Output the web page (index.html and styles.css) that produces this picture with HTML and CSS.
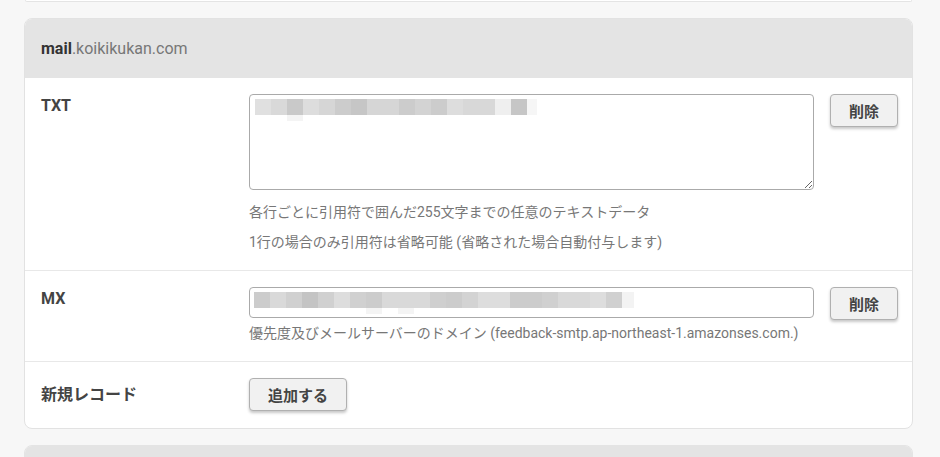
FILE: index.html
```html
<!doctype html>
<html>
<head>
    <meta charset="utf-8">
    <title>DNSレコード</title>
    <link rel="stylesheet" href="styles.css">
</head>
<body>
<div class="page">
    <div class="card-tail"></div>

    <div class="card">
        <div class="card-head"><b>mail</b><span class="domain">.koikikukan.com</span></div>

        <div class="row">
            <div class="label">TXT</div>
            <div class="field">
                <div class="mosaic-wrap">
                    <textarea class="txt-area"></textarea>
                    <svg class="mosaic" width="290" height="22" viewBox="0 0 290 22">
                        <rect x="0" y="0" width="16" height="16" fill="#e0e0e0"/>
                        <rect x="16" y="0" width="16" height="16" fill="#d9d9d9"/>
                        <rect x="32" y="0" width="16" height="16" fill="#c9c9c9"/>
                        <rect x="32" y="16" width="16" height="6" fill="#f4f4f4"/>
                        <rect x="48" y="0" width="16" height="16" fill="#dddddd"/>
                        <rect x="64" y="0" width="16" height="16" fill="#d6d6d6"/>
                        <rect x="80" y="0" width="16" height="16" fill="#cccccc"/>
                        <rect x="96" y="0" width="16" height="16" fill="#c6c6c6"/>
                        <rect x="112" y="0" width="16" height="16" fill="#d6d6d6"/>
                        <rect x="128" y="0" width="16" height="16" fill="#d6d6d6"/>
                        <rect x="144" y="0" width="16" height="16" fill="#cccccc"/>
                        <rect x="160" y="0" width="16" height="16" fill="#d3d3d3"/>
                        <rect x="176" y="0" width="16" height="16" fill="#cccccc"/>
                        <rect x="192" y="0" width="16" height="16" fill="#dddddd"/>
                        <rect x="208" y="0" width="16" height="16" fill="#d8d8d8"/>
                        <rect x="224" y="0" width="16" height="16" fill="#d8d8d8"/>
                        <rect x="240" y="0" width="16" height="16" fill="#efefef"/>
                        <rect x="256" y="0" width="16" height="16" fill="#c6c6c6"/>
                        <rect x="272" y="0" width="10" height="16" fill="#f6f6f6"/>
                    </svg>
                </div>
                <p class="help">各行ごとに引用符で囲んだ255文字までの任意のテキストデータ</p>
                <p class="help">1行の場合のみ引用符は省略可能 (省略された場合自動付与します)</p>
            </div>
            <div><button class="btn">削除</button></div>
        </div>

        <div class="row">
            <div class="label">MX</div>
            <div class="field">
                <div class="mosaic-wrap">
                    <input class="txt-input" type="text">
                    <svg class="mosaic mosaic-mx" width="390" height="22" viewBox="0 0 390 22">
                        <rect x="0" y="0" width="16" height="16" fill="#cccccc"/>
                        <rect x="16" y="0" width="16" height="16" fill="#d9d9d9"/>
                        <rect x="32" y="0" width="16" height="16" fill="#d0d0d0"/>
                        <rect x="48" y="0" width="16" height="16" fill="#c4c4c4"/>
                        <rect x="64" y="0" width="16" height="16" fill="#d0d0d0"/>
                        <rect x="80" y="0" width="16" height="16" fill="#dddddd"/>
                        <rect x="96" y="0" width="16" height="16" fill="#d0d0d0"/>
                        <rect x="112" y="0" width="16" height="16" fill="#cccccc"/>
                        <rect x="112" y="16" width="16" height="6" fill="#f4f4f4"/>
                        <rect x="128" y="0" width="16" height="16" fill="#d9d9d9"/>
                        <rect x="144" y="0" width="16" height="16" fill="#d9d9d9"/>
                        <rect x="144" y="16" width="16" height="6" fill="#f4f4f4"/>
                        <rect x="160" y="0" width="16" height="16" fill="#d9d9d9"/>
                        <rect x="176" y="0" width="16" height="16" fill="#cfcfcf"/>
                        <rect x="192" y="0" width="16" height="16" fill="#cccccc"/>
                        <rect x="208" y="0" width="16" height="16" fill="#d3d3d3"/>
                        <rect x="224" y="0" width="16" height="16" fill="#dddddd"/>
                        <rect x="240" y="0" width="16" height="16" fill="#dddddd"/>
                        <rect x="256" y="0" width="16" height="16" fill="#cccccc"/>
                        <rect x="272" y="0" width="16" height="16" fill="#cccccc"/>
                        <rect x="288" y="0" width="16" height="16" fill="#d0d0d0"/>
                        <rect x="304" y="0" width="16" height="16" fill="#d9d9d9"/>
                        <rect x="320" y="0" width="16" height="16" fill="#d9d9d9"/>
                        <rect x="336" y="0" width="16" height="16" fill="#dddddd"/>
                        <rect x="352" y="0" width="16" height="16" fill="#d0d0d0"/>
                        <rect x="368" y="0" width="12" height="16" fill="#f3f3f3"/>
                    </svg>
                </div>
                <p class="help">優先度及びメールサーバーのドメイン (feedback-smtp.ap-northeast-1.amazonses.com.)</p>
            </div>
            <div><button class="btn">削除</button></div>
        </div>

        <div class="row row-add">
            <div class="label">新規レコード</div>
            <div class="field"><button class="btn">追加する</button></div>
            <div></div>
        </div>
    </div>

    <div class="card card-next">
        <div class="card-head"></div>
    </div>
</div>
</body>
</html>
```

FILE: styles.css
```css
body {
    margin: 0;
    background: #f7f7f7;
    color: #444;
    font-family: Roboto, "Noto Sans CJK JP", sans-serif;
    font-size: 14px;
}

.page {
    padding: 0 27px 0 24px;
    overflow: hidden;
    height: 457px;
    box-sizing: border-box;
}

.card-tail {
    height: 1px;
    margin: 0 1px;
    background: #fff;
    border: 1px solid #e4e4e4;
    border-top: none;
    border-radius: 0 0 6px 6px;
}

.card {
    margin-top: 16px;
    background: #fff;
    border: 1px solid #e2e2e2;
    border-radius: 8px;
    overflow: hidden;
}

.card-head {
    height: 59px;
    background: #e4e4e4;
    display: flex;
    align-items: center;
    padding: 0 16px;
    font-size: 16px;
    color: #333;
}

.card-head b {
    font-weight: 700;
}

.domain {
    color: #777;
}

.row {
    display: grid;
    grid-template-columns: 192px 565px 66px;
    column-gap: 16px;
    padding: 16px 16px 13px;
}

.row + .row {
    border-top: 1px solid #e8e8e8;
}

.row-add {
    align-items: center;
    padding-bottom: 17px;
}

.label {
    font-size: 16px;
    font-weight: 700;
    line-height: 24px;
    color: #444;
}

.mosaic-wrap {
    position: relative;
}

.mosaic {
    position: absolute;
    top: 5px;
    left: 6px;
}

.mosaic-mx {
    left: 5px;
}

.txt-area {
    display: block;
    box-sizing: border-box;
    width: 565px;
    height: 96px;
    margin: 0 0 7px;
    border: 1px solid #aaa;
    border-radius: 4px;
    background: #fff;
    font-family: inherit;
}

.txt-input {
    display: block;
    box-sizing: border-box;
    width: 565px;
    height: 31px;
    margin: 0;
    border: 1px solid #aaa;
    border-radius: 4px;
    background: #fff;
}

.help {
    margin: 0;
    font-size: 14px;
    line-height: 30px;
    color: #777;
    white-space: nowrap;
}

.btn {
    height: 33px;
    padding: 0 18px;
    border: 1px solid #b0b0b0;
    border-radius: 4px;
    background: #f1f1f1;
    box-shadow: 0 2px 3px rgba(0, 0, 0, 0.22);
    font-family: inherit;
    font-size: 15px;
    font-weight: 700;
    color: #444;
    white-space: nowrap;
}

.card-next {
    border-color: #e4e4e4;
}
```
